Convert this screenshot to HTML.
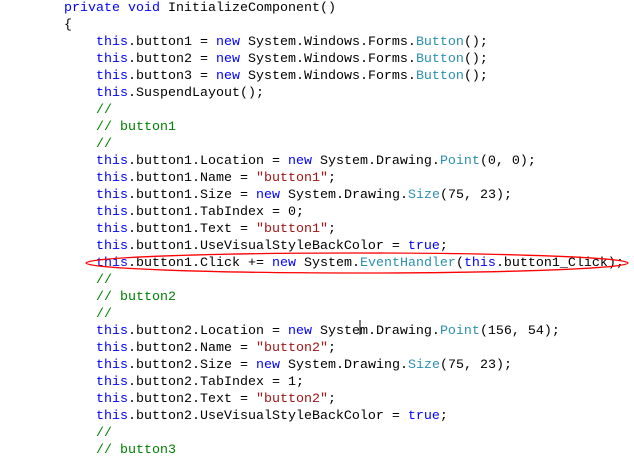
<!DOCTYPE html>
<html><head><style>
html,body{margin:0;padding:0;background:#fff;width:634px;height:444px;overflow:hidden}
pre{position:absolute;left:0;top:-0.5px;margin:0;font-family:"Liberation Mono",monospace;font-size:13.33px;line-height:17px;color:#000}
.k{color:#0000ff}.t{color:#2b91af}.c{color:#008000}.s{color:#a31515}
</style></head><body>
<pre>        <span class="k">private void</span> InitializeComponent()
        {
            <span class="k">this</span>.button1 = <span class="k">new</span> System.Windows.Forms.<span class="t">Button</span>();
            <span class="k">this</span>.button2 = <span class="k">new</span> System.Windows.Forms.<span class="t">Button</span>();
            <span class="k">this</span>.button3 = <span class="k">new</span> System.Windows.Forms.<span class="t">Button</span>();
            <span class="k">this</span>.SuspendLayout();
            <span class="c">//</span>
            <span class="c">// button1</span>
            <span class="c">//</span>
            <span class="k">this</span>.button1.Location = <span class="k">new</span> System.Drawing.<span class="t">Point</span>(0, 0);
            <span class="k">this</span>.button1.Name = <span class="s">"button1"</span>;
            <span class="k">this</span>.button1.Size = <span class="k">new</span> System.Drawing.<span class="t">Size</span>(75, 23);
            <span class="k">this</span>.button1.TabIndex = 0;
            <span class="k">this</span>.button1.Text = <span class="s">"button1"</span>;
            <span class="k">this</span>.button1.UseVisualStyleBackColor = <span class="k">true</span>;
            <span class="k">this</span>.button1.Click += <span class="k">new</span> System.<span class="t">EventHandler</span>(<span class="k">this</span>.button1_Click);
            <span class="c">//</span>
            <span class="c">// button2</span>
            <span class="c">//</span>
            <span class="k">this</span>.button2.Location = <span class="k">new</span> System.Drawing.<span class="t">Point</span>(156, 54);
            <span class="k">this</span>.button2.Name = <span class="s">"button2"</span>;
            <span class="k">this</span>.button2.Size = <span class="k">new</span> System.Drawing.<span class="t">Size</span>(75, 23);
            <span class="k">this</span>.button2.TabIndex = 1;
            <span class="k">this</span>.button2.Text = <span class="s">"button2"</span>;
            <span class="k">this</span>.button2.UseVisualStyleBackColor = <span class="k">true</span>;
            <span class="c">//</span>
            <span class="c">// button3</span>
</pre>
<svg width="634" height="444" style="position:absolute;left:0;top:0">
<ellipse cx="357" cy="263" rx="271" ry="10" fill="none" stroke="#ff0000" stroke-width="1.3"/>
<line x1="360" y1="320" x2="360" y2="335" stroke="#000" stroke-width="1"/>
</svg>
</body></html>
